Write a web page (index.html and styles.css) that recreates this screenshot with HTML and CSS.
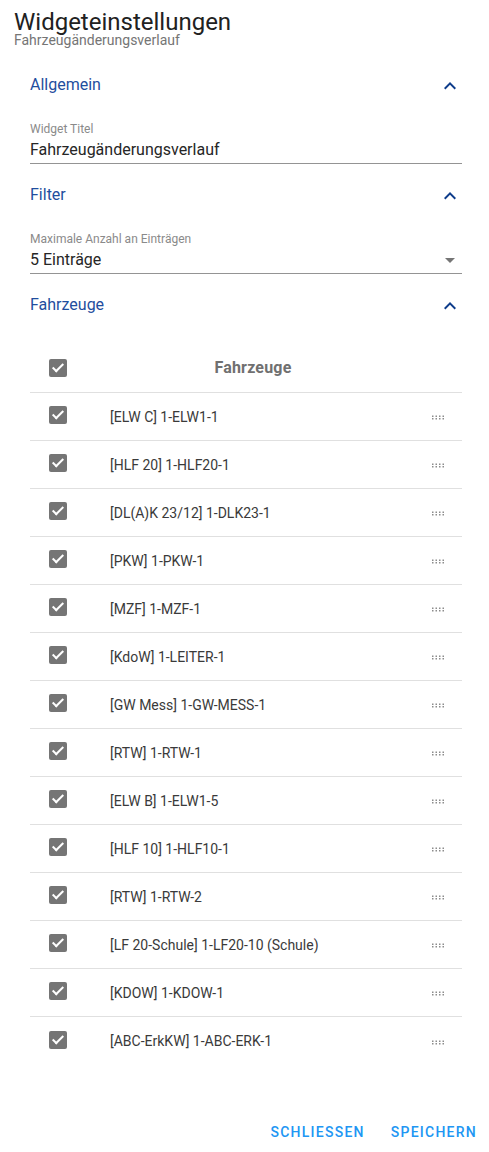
FILE: index.html
```html
<!DOCTYPE html>
<html lang="de">
<head>
  <meta charset="UTF-8">
  <meta name="viewport" content="width=device-width, initial-scale=1.0">
  <title>Widgeteinstellungen</title>
  <link rel="stylesheet" href="styles.css">
</head>
<body>
  <header class="dialog-title">
    <h1>Widgeteinstellungen</h1>
    <div class="subtitle">Fahrzeugänderungsverlauf</div>
  </header>

  <div class="dialog-content">
    <section class="panel">
      <div class="panel-header">
        <span>Allgemein</span>
        <svg class="chevron" width="24" height="24" viewBox="0 0 24 24"><path d="M12 8l-6 6 1.41 1.41L12 10.83l4.59 4.58L18 14z"/></svg>
      </div>
      <div class="field">
        <label>Widget Titel</label>
        <div class="field-value">Fahrzeugänderungsverlauf</div>
      </div>
    </section>

    <section class="panel">
      <div class="panel-header">
        <span>Filter</span>
        <svg class="chevron" width="24" height="24" viewBox="0 0 24 24"><path d="M12 8l-6 6 1.41 1.41L12 10.83l4.59 4.58L18 14z"/></svg>
      </div>
      <div class="field">
        <label>Maximale Anzahl an Einträgen</label>
        <div class="field-value select">
          <span>5 Einträge</span>
          <svg class="arrow" width="24" height="24" viewBox="0 0 24 24"><path d="M7 10l5 5 5-5z"/></svg>
        </div>
      </div>
    </section>

    <section class="panel">
      <div class="panel-header">
        <span>Fahrzeuge</span>
        <svg class="chevron" width="24" height="24" viewBox="0 0 24 24"><path d="M12 8l-6 6 1.41 1.41L12 10.83l4.59 4.58L18 14z"/></svg>
      </div>

      <div class="vehicle-table">
        <div class="row head">
          <div class="cell-check"><span class="checkbox"></span></div>
          <div class="cell-name">Fahrzeuge</div>
          <div class="cell-handle"></div>
        </div>
        <div class="row">
          <div class="cell-check"><span class="checkbox"></span></div>
          <div class="cell-name">[ELW C] 1-ELW1-1</div>
          <div class="cell-handle"><svg class="handle" width="12" height="5" viewBox="0 0 12 5"><path d="M0 .5h1.5V2H0zM3.5 .5h1.5V2H3.5zM7 .5h1.5V2H7zM10.5 .5H12V2h-1.5zM0 3h1.5v1.5H0zM3.5 3h1.5v1.5H3.5zM7 3h1.5v1.5H7zM10.5 3H12v1.5h-1.5z"/></svg></div>
        </div>
        <div class="row">
          <div class="cell-check"><span class="checkbox"></span></div>
          <div class="cell-name">[HLF 20] 1-HLF20-1</div>
          <div class="cell-handle"><svg class="handle" width="12" height="5" viewBox="0 0 12 5"><path d="M0 .5h1.5V2H0zM3.5 .5h1.5V2H3.5zM7 .5h1.5V2H7zM10.5 .5H12V2h-1.5zM0 3h1.5v1.5H0zM3.5 3h1.5v1.5H3.5zM7 3h1.5v1.5H7zM10.5 3H12v1.5h-1.5z"/></svg></div>
        </div>
        <div class="row">
          <div class="cell-check"><span class="checkbox"></span></div>
          <div class="cell-name">[DL(A)K 23/12] 1-DLK23-1</div>
          <div class="cell-handle"><svg class="handle" width="12" height="5" viewBox="0 0 12 5"><path d="M0 .5h1.5V2H0zM3.5 .5h1.5V2H3.5zM7 .5h1.5V2H7zM10.5 .5H12V2h-1.5zM0 3h1.5v1.5H0zM3.5 3h1.5v1.5H3.5zM7 3h1.5v1.5H7zM10.5 3H12v1.5h-1.5z"/></svg></div>
        </div>
        <div class="row">
          <div class="cell-check"><span class="checkbox"></span></div>
          <div class="cell-name">[PKW] 1-PKW-1</div>
          <div class="cell-handle"><svg class="handle" width="12" height="5" viewBox="0 0 12 5"><path d="M0 .5h1.5V2H0zM3.5 .5h1.5V2H3.5zM7 .5h1.5V2H7zM10.5 .5H12V2h-1.5zM0 3h1.5v1.5H0zM3.5 3h1.5v1.5H3.5zM7 3h1.5v1.5H7zM10.5 3H12v1.5h-1.5z"/></svg></div>
        </div>
        <div class="row">
          <div class="cell-check"><span class="checkbox"></span></div>
          <div class="cell-name">[MZF] 1-MZF-1</div>
          <div class="cell-handle"><svg class="handle" width="12" height="5" viewBox="0 0 12 5"><path d="M0 .5h1.5V2H0zM3.5 .5h1.5V2H3.5zM7 .5h1.5V2H7zM10.5 .5H12V2h-1.5zM0 3h1.5v1.5H0zM3.5 3h1.5v1.5H3.5zM7 3h1.5v1.5H7zM10.5 3H12v1.5h-1.5z"/></svg></div>
        </div>
        <div class="row">
          <div class="cell-check"><span class="checkbox"></span></div>
          <div class="cell-name">[KdoW] 1-LEITER-1</div>
          <div class="cell-handle"><svg class="handle" width="12" height="5" viewBox="0 0 12 5"><path d="M0 .5h1.5V2H0zM3.5 .5h1.5V2H3.5zM7 .5h1.5V2H7zM10.5 .5H12V2h-1.5zM0 3h1.5v1.5H0zM3.5 3h1.5v1.5H3.5zM7 3h1.5v1.5H7zM10.5 3H12v1.5h-1.5z"/></svg></div>
        </div>
        <div class="row">
          <div class="cell-check"><span class="checkbox"></span></div>
          <div class="cell-name">[GW Mess] 1-GW-MESS-1</div>
          <div class="cell-handle"><svg class="handle" width="12" height="5" viewBox="0 0 12 5"><path d="M0 .5h1.5V2H0zM3.5 .5h1.5V2H3.5zM7 .5h1.5V2H7zM10.5 .5H12V2h-1.5zM0 3h1.5v1.5H0zM3.5 3h1.5v1.5H3.5zM7 3h1.5v1.5H7zM10.5 3H12v1.5h-1.5z"/></svg></div>
        </div>
        <div class="row">
          <div class="cell-check"><span class="checkbox"></span></div>
          <div class="cell-name">[RTW] 1-RTW-1</div>
          <div class="cell-handle"><svg class="handle" width="12" height="5" viewBox="0 0 12 5"><path d="M0 .5h1.5V2H0zM3.5 .5h1.5V2H3.5zM7 .5h1.5V2H7zM10.5 .5H12V2h-1.5zM0 3h1.5v1.5H0zM3.5 3h1.5v1.5H3.5zM7 3h1.5v1.5H7zM10.5 3H12v1.5h-1.5z"/></svg></div>
        </div>
        <div class="row">
          <div class="cell-check"><span class="checkbox"></span></div>
          <div class="cell-name">[ELW B] 1-ELW1-5</div>
          <div class="cell-handle"><svg class="handle" width="12" height="5" viewBox="0 0 12 5"><path d="M0 .5h1.5V2H0zM3.5 .5h1.5V2H3.5zM7 .5h1.5V2H7zM10.5 .5H12V2h-1.5zM0 3h1.5v1.5H0zM3.5 3h1.5v1.5H3.5zM7 3h1.5v1.5H7zM10.5 3H12v1.5h-1.5z"/></svg></div>
        </div>
        <div class="row">
          <div class="cell-check"><span class="checkbox"></span></div>
          <div class="cell-name">[HLF 10] 1-HLF10-1</div>
          <div class="cell-handle"><svg class="handle" width="12" height="5" viewBox="0 0 12 5"><path d="M0 .5h1.5V2H0zM3.5 .5h1.5V2H3.5zM7 .5h1.5V2H7zM10.5 .5H12V2h-1.5zM0 3h1.5v1.5H0zM3.5 3h1.5v1.5H3.5zM7 3h1.5v1.5H7zM10.5 3H12v1.5h-1.5z"/></svg></div>
        </div>
        <div class="row">
          <div class="cell-check"><span class="checkbox"></span></div>
          <div class="cell-name">[RTW] 1-RTW-2</div>
          <div class="cell-handle"><svg class="handle" width="12" height="5" viewBox="0 0 12 5"><path d="M0 .5h1.5V2H0zM3.5 .5h1.5V2H3.5zM7 .5h1.5V2H7zM10.5 .5H12V2h-1.5zM0 3h1.5v1.5H0zM3.5 3h1.5v1.5H3.5zM7 3h1.5v1.5H7zM10.5 3H12v1.5h-1.5z"/></svg></div>
        </div>
        <div class="row">
          <div class="cell-check"><span class="checkbox"></span></div>
          <div class="cell-name">[LF 20-Schule] 1-LF20-10 (Schule)</div>
          <div class="cell-handle"><svg class="handle" width="12" height="5" viewBox="0 0 12 5"><path d="M0 .5h1.5V2H0zM3.5 .5h1.5V2H3.5zM7 .5h1.5V2H7zM10.5 .5H12V2h-1.5zM0 3h1.5v1.5H0zM3.5 3h1.5v1.5H3.5zM7 3h1.5v1.5H7zM10.5 3H12v1.5h-1.5z"/></svg></div>
        </div>
        <div class="row">
          <div class="cell-check"><span class="checkbox"></span></div>
          <div class="cell-name">[KDOW] 1-KDOW-1</div>
          <div class="cell-handle"><svg class="handle" width="12" height="5" viewBox="0 0 12 5"><path d="M0 .5h1.5V2H0zM3.5 .5h1.5V2H3.5zM7 .5h1.5V2H7zM10.5 .5H12V2h-1.5zM0 3h1.5v1.5H0zM3.5 3h1.5v1.5H3.5zM7 3h1.5v1.5H7zM10.5 3H12v1.5h-1.5z"/></svg></div>
        </div>
        <div class="row last">
          <div class="cell-check"><span class="checkbox"></span></div>
          <div class="cell-name">[ABC-ErkKW] 1-ABC-ERK-1</div>
          <div class="cell-handle"><svg class="handle" width="12" height="5" viewBox="0 0 12 5"><path d="M0 .5h1.5V2H0zM3.5 .5h1.5V2H3.5zM7 .5h1.5V2H7zM10.5 .5H12V2h-1.5zM0 3h1.5v1.5H0zM3.5 3h1.5v1.5H3.5zM7 3h1.5v1.5H7zM10.5 3H12v1.5h-1.5z"/></svg></div>
        </div>
      </div>
    </section>
  </div>

  <div class="dialog-actions">
    <button class="text-button">Schliessen</button>
    <button class="text-button">Speichern</button>
  </div>
</body>
</html>
```

FILE: styles.css
```css
body {
  margin: 0;
  padding: 0;
  font-family: Roboto, "Liberation Sans", Arial, sans-serif;
  background-color: #fff;
  color: rgba(0, 0, 0, 0.87);
  width: 489px;
}
.dialog-title {
  padding: 11px 14px 0;
}
.dialog-title h1 {
  margin: 0;
  font-size: 24px;
  font-weight: 400;
  line-height: 22px;
  color: #212121;
}
.subtitle {
  font-size: 14px;
  line-height: 14px;
  color: #757575;
}
.dialog-content {
  padding: 13px 27px 0 30px;
}
.panel-header {
  height: 48px;
  display: flex;
  align-items: center;
  justify-content: space-between;
  font-size: 16px;
  color: #1f4e9e;
}
.chevron {
  fill: #0d3b8a;
  margin-top: 4px;
}
.field {
  padding-top: 14px;
  margin-bottom: 6px;
}
.field label {
  display: block;
  font-size: 12px;
  line-height: 14px;
  color: #8a8a8a;
  margin-bottom: 4px;
}
.field-value {
  font-size: 16px;
  line-height: 20px;
  padding-bottom: 3px;
  border-bottom: 1px solid #949494;
  color: #262626;
}
.field-value.select {
  display: flex;
  align-items: center;
  justify-content: space-between;
}
.arrow {
  fill: #757575;
  margin: -4px 0 -4px;
}
.vehicle-table {
  margin-top: 15px;
}
.row {
  display: grid;
  grid-template-columns: 62px 1fr 48px;
  align-items: center;
  height: 48px;
  border-bottom: 1px solid #e0e0e0;
  box-sizing: border-box;
}
.row.head {
  height: 50px;
}
.row.last {
  border-bottom: none;
}
.cell-check {
  padding-left: 19px;
  display: flex;
}
.checkbox {
  position: relative;
  display: inline-block;
  width: 18px;
  height: 18px;
  border-radius: 2px;
  background-color: #757575;
  margin-top: -3px;
}
.row.head .checkbox {
  margin-top: 0;
}
.checkbox::after {
  content: "";
  position: absolute;
  left: 6px;
  top: 2px;
  width: 4px;
  height: 9px;
  border-right: 2px solid #fff;
  border-bottom: 2px solid #fff;
  transform: rotate(45deg);
}
.cell-name {
  padding-left: 18px;
  font-size: 14px;
  color: #3a3a3a;
}
.row.head .cell-name {
  padding-left: 0;
  text-align: center;
  font-size: 16px;
  font-weight: 700;
  color: #707070;
  letter-spacing: 0.2px;
}
.cell-handle {
  display: flex;
  justify-content: center;
}
.handle {
  fill: #8c8c8c;
  margin-top: 2px;
}
.dialog-actions {
  display: flex;
  justify-content: flex-end;
  gap: 10px;
  padding: 0 4px 0 0;
  margin-top: 49px;
}
.text-button {
  background: none;
  border: none;
  height: 36px;
  padding: 0 8px;
  font-family: Roboto, "Liberation Sans", Arial, sans-serif;
  font-size: 14px;
  font-weight: 500;
  letter-spacing: 1.25px;
  text-transform: uppercase;
  color: #2196f3;
  cursor: pointer;
}
```
